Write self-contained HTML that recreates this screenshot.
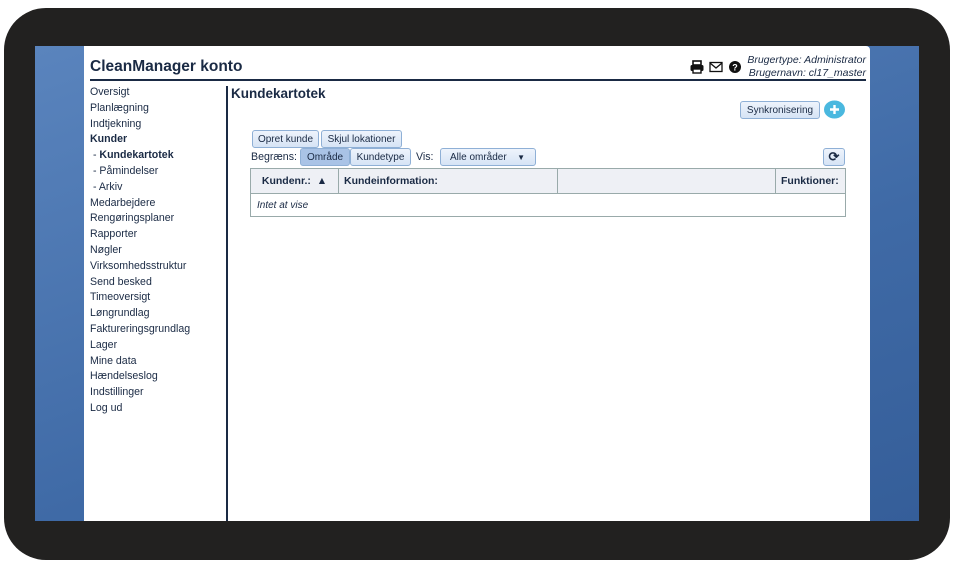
<!DOCTYPE html><html><head><style>
body{margin:0;width:954px;height:567px;background:#fff;position:relative;overflow:hidden;font-family:"Liberation Sans",sans-serif;color:#1a2a44}
.frame{position:absolute;left:4px;top:8px;width:946px;height:552px;background:#222120;border-radius:42px}
.screen{position:absolute;left:35px;top:46px;width:884px;height:475px;background:linear-gradient(160deg,#5a84bd,#3f6aa6 60%,#355e99)}
.panel{position:absolute;left:84px;top:46px;width:786px;height:475px;background:#fff;border-top-right-radius:4px}
.a{position:absolute;white-space:nowrap}
.menu div{height:15.8px;font-size:10.6px;line-height:15.8px}
.btn{position:absolute;border:1px solid #8fb0d6;background:linear-gradient(#eef4fc,#d6e4f5);border-radius:3px;font-size:10px;box-sizing:border-box;color:#1a2a44;display:flex;align-items:center;justify-content:center}
td,th{border:1px solid #9aa;font-size:10.5px;box-sizing:border-box}
</style></head><body>
<div class="frame"></div><div class="screen"></div>
<div class="panel"></div>
<div class="a" style="left:90px;top:58px;font-size:15.5px;font-weight:bold">CleanManager konto</div>
<div class="a" style="left:90px;top:79px;width:776px;height:1.5px;background:#1a2a44"></div>
<div class="a" style="left:226px;top:86px;width:1.5px;height:435px;background:#1a2a44"></div>
<div class="a" style="right:88px;top:54px;font-size:10.5px;font-style:italic;text-align:right;line-height:12.5px">Brugertype: Administrator<br>Brugernavn: cl17_master</div>
<svg class="a" style="left:690px;top:60px" width="56" height="14" viewBox="0 0 56 14"><rect x="3" y="1" width="8" height="4" fill="none" stroke="#111" stroke-width="1.6"/><rect x="0.5" y="5" width="13" height="6" rx="1.5" fill="#111"/><rect x="3" y="9" width="8" height="4" fill="#fff" stroke="#111" stroke-width="1.4"/><rect x="20" y="2.5" width="12" height="9" fill="none" stroke="#111" stroke-width="1.3"/><path d="M20 3l6 5 6-5" fill="none" stroke="#111" stroke-width="1.3"/><circle cx="45" cy="7" r="6" fill="#111"/><text x="45" y="10.5" font-size="9" font-weight="bold" fill="#fff" text-anchor="middle" font-family="Liberation Sans">?</text></svg>
<div class="a menu" style="left:90px;top:85px">
<div>Oversigt</div><div>Planlægning</div><div>Indtjekning</div><div><b>Kunder</b></div><div>&nbsp;- <b>Kundekartotek</b></div><div>&nbsp;- Påmindelser</div><div>&nbsp;- Arkiv</div><div>Medarbejdere</div><div>Rengøringsplaner</div><div>Rapporter</div><div>Nøgler</div><div>Virksomhedsstruktur</div><div>Send besked</div><div>Timeoversigt</div><div>Løngrundlag</div><div>Faktureringsgrundlag</div><div>Lager</div><div>Mine data</div><div>Hændelseslog</div><div>Indstillinger</div><div>Log ud</div></div>
<div class="a" style="left:231px;top:86px;font-size:13.5px;font-weight:bold">Kundekartotek</div>
<div class="btn" style="left:740px;top:101px;width:80px;height:18px">Synkronisering</div>
<svg class="a" style="left:824px;top:100px" width="21" height="19"><ellipse cx="10.5" cy="9.5" rx="10.5" ry="9" fill="#4ab8df"/><path d="M10.5 5v9M6 9.5h9" stroke="#fff" stroke-width="2.4"/></svg>
<div class="btn" style="left:252px;top:130px;width:67px;height:18px">Opret kunde</div>
<div class="btn" style="left:321px;top:130px;width:81px;height:18px">Skjul lokationer</div>
<div class="a" style="left:251px;top:151px;font-size:10.6px">Begræns:</div>
<div class="btn" style="left:300px;top:148px;width:50px;height:18px;background:#a9c3e6">Område</div>
<div class="btn" style="left:350px;top:148px;width:61px;height:18px">Kundetype</div>
<div class="a" style="left:416px;top:151px;font-size:10.6px">Vis:</div>
<div class="btn" style="left:440px;top:148px;width:96px;height:18px;justify-content:flex-start;padding-left:9px">Alle områder <span style="position:absolute;right:10px;font-size:8px">▼</span></div>
<div class="btn" style="left:823px;top:148px;width:22px;height:18px;font-size:13px;font-weight:bold">⟳</div>
<table style="position:absolute;left:250px;top:168px;width:596px;border-collapse:collapse;table-layout:fixed">
<tr style="height:25px;background:#eef0f5"><th style="width:88px">Kundenr.: &nbsp;▲</th><th style="text-align:left;padding-left:5px;width:219px">Kundeinformation:</th><th style="width:218px"></th><th style="text-align:left;padding-left:5px">Funktioner:</th></tr>
<tr style="height:23px"><td colspan="4" style="font-style:italic;padding-left:6px;font-size:10px">Intet at vise</td></tr></table>
</body></html>
